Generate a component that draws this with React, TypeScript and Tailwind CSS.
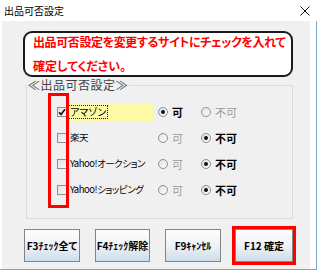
import React from "react";

type Site = { name: string; checked: boolean; allow: boolean; highlight?: boolean };

const SITES: Site[] = [
  { name: "アマゾン", checked: true, allow: true, highlight: true },
  { name: "楽天", checked: false, allow: false },
  { name: "Yahoo!オークション", checked: false, allow: false },
  { name: "Yahoo!ショッピング", checked: false, allow: false },
];

function CheckBox({ checked }: { checked: boolean }) {
  return (
    <span className="flex h-[10px] w-[10px] shrink-0 items-center justify-center border border-[#8e8f8f] bg-linear-to-br from-[#dfe3e8] to-[#f7f8f9]">
      {checked && (
        <svg viewBox="0 0 8 8" className="h-[8px] w-[8px]">
          <path d="M1 4.2 L3 6.4 L7 1.2" fill="none" stroke="#111" strokeWidth={1.6} />
        </svg>
      )}
    </span>
  );
}

function Radio({ on, label }: { on: boolean; label: string }) {
  return (
    <span className="flex items-center gap-[4px]">
      <span className="flex h-[10px] w-[10px] items-center justify-center rounded-full border border-[#8e8f8f] bg-linear-to-br from-[#dfe3e8] to-[#fbfbfb]">
        {on && <span className="h-[4px] w-[4px] rounded-full bg-[#111]" />}
      </span>
      <span className={on ? "text-[11px] font-bold leading-none text-black" : "text-[11px] leading-none text-[#9a9a9a]"}>
        {label}
      </span>
    </span>
  );
}

function Btn({ label, w }: { label: string; w: string }) {
  return (
    <button
      type="button"
      className={`flex h-[33px] ${w} items-center justify-center whitespace-nowrap border border-[#858585] bg-linear-to-b from-[#fdfdfd] via-[#eef3f8] to-[#cddcea] text-[10px] font-bold leading-none text-black [font-feature-settings:'palt']`}
    >
      {label}
    </button>
  );
}

export default function App() {
  return (
    <div className="relative h-[272px] w-[320px] overflow-hidden bg-white [font-family:'Noto_Sans_CJK_JP','Noto_Sans',sans-serif]">
      {/* タイトルバー */}
      <div className="flex h-[21px] items-center justify-between pl-[4px] pr-[10px]">
        <span className="text-[10px] leading-none text-black">出品可否設定</span>
        <svg viewBox="0 0 10 10" className="h-[10px] w-[10px]">
          <path d="M0.5 0.5 L9.5 9.5 M9.5 0.5 L0.5 9.5" stroke="#111" strokeWidth={1} />
        </svg>
      </div>

      <div className="h-[249px] w-[317px] border-r border-b border-[#7aa3cf]">
        <div className="ml-[2px] flex h-[248px] w-[308px] flex-col bg-[#f0f0f0]">
          {/* メッセージ */}
          <div className="ml-[21px] mt-[10px] w-[270px] rounded-[9px] border-2 border-[#1a1a1a] bg-white pl-[8px] text-[12px] font-bold text-[#ff0000] [font-feature-settings:'palt']">
            <div className="h-[18px] whitespace-nowrap leading-[18px] tracking-[-0.4px]">出品可否設定を変更するサイトにチェックを入れて</div>
            <div className="mt-[6px] h-[18px] whitespace-nowrap leading-[18px]">確定してください。</div>
          </div>

          {/* 出品可否設定 */}
          <div className="ml-[24px] mt-[2px] w-[267px]">
            <div className="relative z-10 ml-[2px] w-fit bg-[#f0f0f0] pr-[1px] text-[12px] leading-[12px] tracking-[0.5px] text-[#444]">
              ≪出品可否設定≫
            </div>
            <div className="-mt-[6px] flex h-[134px] flex-col border border-[#d3dde5] pl-[30px] pt-[13px] [font-feature-settings:'palt']">
              {SITES.map((s) => (
                <div key={s.name} className="flex h-[26px] items-center">
                  <CheckBox checked={s.checked} />
                  <div className={`ml-[1px] flex h-[19px] w-[85px] items-center ${s.highlight ? "bg-[#fdfba6]" : ""}`}>
                    {s.highlight ? (
                      <span className="whitespace-nowrap border border-dotted border-[#222] px-[1px] text-[10px] leading-[12px] text-black">
                        {s.name}
                      </span>
                    ) : (
                      <span className="whitespace-nowrap pl-[2px] text-[9.5px] leading-none tracking-[-0.5px] text-black">
                        {s.name}
                      </span>
                    )}
                  </div>
                  <div className="ml-[5px] w-[43px]">
                    <Radio on={s.allow} label="可" />
                  </div>
                  <Radio on={!s.allow} label="不可" />
                </div>
              ))}
            </div>
          </div>

          {/* ボタン */}
          <div className="ml-[22px] mt-[10px] flex">
            <Btn label="F3ﾁｪｯｸ全て" w="w-[56px]" />
            <div className="ml-[15px]">
              <Btn label="F4ﾁｪｯｸ解除" w="w-[55px]" />
            </div>
            <div className="ml-[15px]">
              <Btn label="F9ｷｬﾝｾﾙ" w="w-[56px]" />
            </div>
            <div className="relative ml-[14px]">
              <Btn label="F12 確定" w="w-[58px]" />
              <div className="absolute -inset-[3px] border-[3px] border-[#ff0000]" />
            </div>
          </div>
        </div>
      </div>

      {/* 注目枠 */}
      <div className="absolute left-[48px] top-[93px] h-[115px] w-[21px] border-[3px] border-[#ff0000]" />
    </div>
  );
}
